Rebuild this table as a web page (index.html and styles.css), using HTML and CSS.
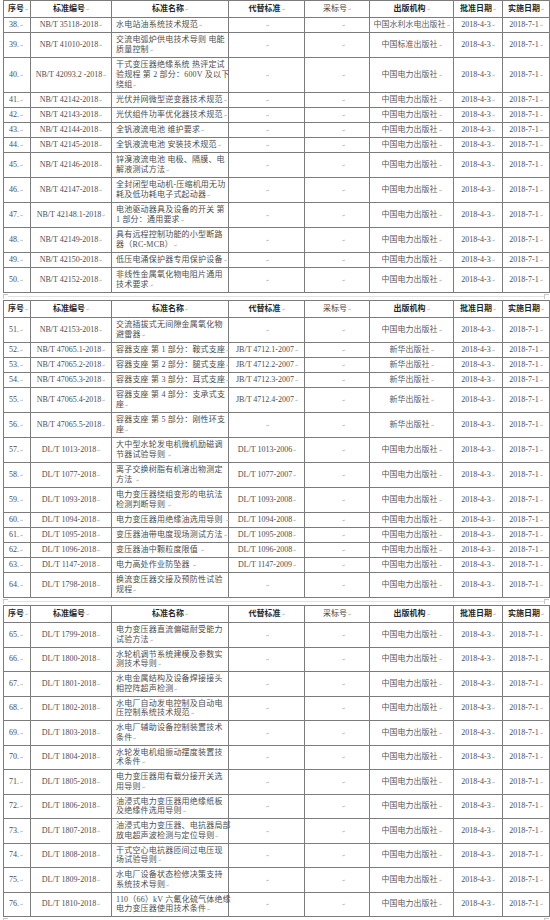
FILE: index.html
```html
<!DOCTYPE html>
<html lang="zh">
<head>
<meta charset="utf-8">
<title>标准清单</title>
<link rel="stylesheet" href="styles.css">
</head>
<body>
<div class="page">

<table class="std">
<colgroup><col class="c1"><col class="c2"><col class="c3"><col class="c4"><col class="c5"><col class="c6"><col class="c7"><col class="c8"></colgroup>
<tr class="head"><th class="no">序号<span class="pm">↵</span></th><th>标准编号<span class="pm">↵</span></th><th>标准名称<span class="pm">↵</span></th><th>代替标准<span class="pm">↵</span></th><th class="light">采标号<span class="pm">↵</span></th><th>出版机构<span class="pm">↵</span></th><th>批准日期<span class="pm">↵</span></th><th>实施日期<span class="pm">↵</span></th></tr>
<tr><td class="no">38.<span class="pm">↵</span></td><td class="code">NB/T 35118-2018<span class="pm">↵</span></td><td class="name">水电站油系统技术规范<span class="pm">↵</span></td><td class="rep"><span class="pm">↵</span></td><td class="adopt"><span class="pm">↵</span></td><td class="pub">中国水利水电出版社<span class="pm">↵</span></td><td class="date">2018-4-3<span class="pm">↵</span></td><td class="date">2018-7-1<span class="pm">↵</span></td></tr>
<tr><td class="no">39.<span class="pm">↵</span></td><td class="code">NB/T 41010-2018<span class="pm">↵</span></td><td class="name">交流电弧炉供电技术导则 电能<br>质量控制<span class="pm">↵</span></td><td class="rep"><span class="pm">↵</span></td><td class="adopt"><span class="pm">↵</span></td><td class="pub">中国标准出版社<span class="pm">↵</span></td><td class="date">2018-4-3<span class="pm">↵</span></td><td class="date">2018-7-1<span class="pm">↵</span></td></tr>
<tr><td class="no">40.<span class="pm">↵</span></td><td class="code">NB/T 42093.2 -2018<span class="pm">↵</span></td><td class="name">干式变压器绝缘系统 热评定试<br>验规程 第 2 部分：600V 及以下<br>绕组<span class="pm">↵</span></td><td class="rep"><span class="pm">↵</span></td><td class="adopt"><span class="pm">↵</span></td><td class="pub">中国电力出版社<span class="pm">↵</span></td><td class="date">2018-4-3<span class="pm">↵</span></td><td class="date">2018-7-1<span class="pm">↵</span></td></tr>
<tr><td class="no">41.<span class="pm">↵</span></td><td class="code">NB/T 42142-2018<span class="pm">↵</span></td><td class="name">光伏并网微型逆变器技术规范<span class="pm">↵</span></td><td class="rep"><span class="pm">↵</span></td><td class="adopt"><span class="pm">↵</span></td><td class="pub">中国电力出版社<span class="pm">↵</span></td><td class="date">2018-4-3<span class="pm">↵</span></td><td class="date">2018-7-1<span class="pm">↵</span></td></tr>
<tr><td class="no">42.<span class="pm">↵</span></td><td class="code">NB/T 42143-2018<span class="pm">↵</span></td><td class="name">光伏组件功率优化器技术规范<span class="pm">↵</span></td><td class="rep"><span class="pm">↵</span></td><td class="adopt"><span class="pm">↵</span></td><td class="pub">中国电力出版社<span class="pm">↵</span></td><td class="date">2018-4-3<span class="pm">↵</span></td><td class="date">2018-7-1<span class="pm">↵</span></td></tr>
<tr><td class="no">43.<span class="pm">↵</span></td><td class="code">NB/T 42144-2018<span class="pm">↵</span></td><td class="name">全钒液流电池 维护要求<span class="pm">↵</span></td><td class="rep"><span class="pm">↵</span></td><td class="adopt"><span class="pm">↵</span></td><td class="pub">中国电力出版社<span class="pm">↵</span></td><td class="date">2018-4-3<span class="pm">↵</span></td><td class="date">2018-7-1<span class="pm">↵</span></td></tr>
<tr><td class="no">44.<span class="pm">↵</span></td><td class="code">NB/T 42145-2018<span class="pm">↵</span></td><td class="name">全钒液流电池 安装技术规范<span class="pm">↵</span></td><td class="rep"><span class="pm">↵</span></td><td class="adopt"><span class="pm">↵</span></td><td class="pub">中国电力出版社<span class="pm">↵</span></td><td class="date">2018-4-3<span class="pm">↵</span></td><td class="date">2018-7-1<span class="pm">↵</span></td></tr>
<tr><td class="no">45.<span class="pm">↵</span></td><td class="code">NB/T 42146-2018<span class="pm">↵</span></td><td class="name">锌溴液流电池 电极、隔膜、电<br>解液测试方法<span class="pm">↵</span></td><td class="rep"><span class="pm">↵</span></td><td class="adopt"><span class="pm">↵</span></td><td class="pub">中国电力出版社<span class="pm">↵</span></td><td class="date">2018-4-3<span class="pm">↵</span></td><td class="date">2018-7-1<span class="pm">↵</span></td></tr>
<tr><td class="no">46.<span class="pm">↵</span></td><td class="code">NB/T 42147-2018<span class="pm">↵</span></td><td class="name">全封闭型电动机-压缩机用无功<br>耗及低功耗电子式起动器<span class="pm">↵</span></td><td class="rep"><span class="pm">↵</span></td><td class="adopt"><span class="pm">↵</span></td><td class="pub">中国电力出版社<span class="pm">↵</span></td><td class="date">2018-4-3<span class="pm">↵</span></td><td class="date">2018-7-1<span class="pm">↵</span></td></tr>
<tr><td class="no">47.<span class="pm">↵</span></td><td class="code">NB/T 42148.1-2018<span class="pm">↵</span></td><td class="name">电池驱动器具及设备的开关 第<br>1 部分：通用要求<span class="pm">↵</span></td><td class="rep"><span class="pm">↵</span></td><td class="adopt"><span class="pm">↵</span></td><td class="pub">中国电力出版社<span class="pm">↵</span></td><td class="date">2018-4-3<span class="pm">↵</span></td><td class="date">2018-7-1<span class="pm">↵</span></td></tr>
<tr><td class="no">48.<span class="pm">↵</span></td><td class="code">NB/T 42149-2018<span class="pm">↵</span></td><td class="name">具有远程控制功能的小型断路<br>器（RC-MCB）<span class="pm">↵</span></td><td class="rep"><span class="pm">↵</span></td><td class="adopt"><span class="pm">↵</span></td><td class="pub">中国电力出版社<span class="pm">↵</span></td><td class="date">2018-4-3<span class="pm">↵</span></td><td class="date">2018-7-1<span class="pm">↵</span></td></tr>
<tr><td class="no">49.<span class="pm">↵</span></td><td class="code">NB/T 42150-2018<span class="pm">↵</span></td><td class="name">低压电涌保护器专用保护设备<span class="pm">↵</span></td><td class="rep"><span class="pm">↵</span></td><td class="adopt"><span class="pm">↵</span></td><td class="pub">中国电力出版社<span class="pm">↵</span></td><td class="date">2018-4-3<span class="pm">↵</span></td><td class="date">2018-7-1<span class="pm">↵</span></td></tr>
<tr><td class="no">50.<span class="pm">↵</span></td><td class="code">NB/T 42152-2018<span class="pm">↵</span></td><td class="name">非线性金属氧化物电阻片通用<br>技术要求<span class="pm">↵</span></td><td class="rep"><span class="pm">↵</span></td><td class="adopt"><span class="pm">↵</span></td><td class="pub">中国电力出版社<span class="pm">↵</span></td><td class="date">2018-4-3<span class="pm">↵</span></td><td class="date">2018-7-1<span class="pm">↵</span></td></tr>
</table>

<div class="sep"><span class="mk"></span><span class="line"></span><span class="mk"></span></div>

<table class="std">
<colgroup><col class="c1"><col class="c2"><col class="c3"><col class="c4"><col class="c5"><col class="c6"><col class="c7"><col class="c8"></colgroup>
<tr class="head"><th class="no">序号<span class="pm">↵</span></th><th>标准编号<span class="pm">↵</span></th><th>标准名称<span class="pm">↵</span></th><th>代替标准<span class="pm">↵</span></th><th class="light">采标号<span class="pm">↵</span></th><th>出版机构<span class="pm">↵</span></th><th>批准日期<span class="pm">↵</span></th><th>实施日期<span class="pm">↵</span></th></tr>
<tr><td class="no">51.<span class="pm">↵</span></td><td class="code">NB/T 42153-2018<span class="pm">↵</span></td><td class="name">交流插拔式无间隙金属氧化物<br>避雷器<span class="pm">↵</span></td><td class="rep"><span class="pm">↵</span></td><td class="adopt"><span class="pm">↵</span></td><td class="pub">中国电力出版社<span class="pm">↵</span></td><td class="date">2018-4-3<span class="pm">↵</span></td><td class="date">2018-7-1<span class="pm">↵</span></td></tr>
<tr><td class="no">52.<span class="pm">↵</span></td><td class="code">NB/T 47065.1-2018<span class="pm">↵</span></td><td class="name">容器支座 第 1 部分：鞍式支座<span class="pm">↵</span></td><td class="rep">JB/T 4712.1-2007<span class="pm">↵</span></td><td class="adopt"><span class="pm">↵</span></td><td class="pub">新华出版社<span class="pm">↵</span></td><td class="date">2018-4-3<span class="pm">↵</span></td><td class="date">2018-7-1<span class="pm">↵</span></td></tr>
<tr><td class="no">53.<span class="pm">↵</span></td><td class="code">NB/T 47065.2-2018<span class="pm">↵</span></td><td class="name">容器支座 第 2 部分：腿式支座<span class="pm">↵</span></td><td class="rep">JB/T 4712.2-2007<span class="pm">↵</span></td><td class="adopt"><span class="pm">↵</span></td><td class="pub">新华出版社<span class="pm">↵</span></td><td class="date">2018-4-3<span class="pm">↵</span></td><td class="date">2018-7-1<span class="pm">↵</span></td></tr>
<tr><td class="no">54.<span class="pm">↵</span></td><td class="code">NB/T 47065.3-2018<span class="pm">↵</span></td><td class="name">容器支座 第 3 部分：耳式支座<span class="pm">↵</span></td><td class="rep">JB/T 4712.3-2007<span class="pm">↵</span></td><td class="adopt"><span class="pm">↵</span></td><td class="pub">新华出版社<span class="pm">↵</span></td><td class="date">2018-4-3<span class="pm">↵</span></td><td class="date">2018-7-1<span class="pm">↵</span></td></tr>
<tr><td class="no">55.<span class="pm">↵</span></td><td class="code">NB/T 47065.4-2018<span class="pm">↵</span></td><td class="name">容器支座 第 4 部分：支承式支<br>座<span class="pm">↵</span></td><td class="rep">JB/T 4712.4-2007<span class="pm">↵</span></td><td class="adopt"><span class="pm">↵</span></td><td class="pub">新华出版社<span class="pm">↵</span></td><td class="date">2018-4-3<span class="pm">↵</span></td><td class="date">2018-7-1<span class="pm">↵</span></td></tr>
<tr><td class="no">56.<span class="pm">↵</span></td><td class="code">NB/T 47065.5-2018<span class="pm">↵</span></td><td class="name">容器支座 第 5 部分：刚性环支<br>座<span class="pm">↵</span></td><td class="rep"><span class="pm">↵</span></td><td class="adopt"><span class="pm">↵</span></td><td class="pub">新华出版社<span class="pm">↵</span></td><td class="date">2018-4-3<span class="pm">↵</span></td><td class="date">2018-7-1<span class="pm">↵</span></td></tr>
<tr><td class="no">57.<span class="pm">↵</span></td><td class="code">DL/T 1013-2018<span class="pm">↵</span></td><td class="name">大中型水轮发电机微机励磁调<br>节器试验导则 <span class="pm">↵</span></td><td class="rep">DL/T 1013-2006<span class="pm">↵</span></td><td class="adopt"><span class="pm">↵</span></td><td class="pub">中国电力出版社<span class="pm">↵</span></td><td class="date">2018-4-3<span class="pm">↵</span></td><td class="date">2018-7-1<span class="pm">↵</span></td></tr>
<tr><td class="no">58.<span class="pm">↵</span></td><td class="code">DL/T 1077-2018<span class="pm">↵</span></td><td class="name">离子交换树脂有机溶出物测定<br>方法 <span class="pm">↵</span></td><td class="rep">DL/T 1077-2007<span class="pm">↵</span></td><td class="adopt"><span class="pm">↵</span></td><td class="pub">中国电力出版社<span class="pm">↵</span></td><td class="date">2018-4-3<span class="pm">↵</span></td><td class="date">2018-7-1<span class="pm">↵</span></td></tr>
<tr><td class="no">59.<span class="pm">↵</span></td><td class="code">DL/T 1093-2018<span class="pm">↵</span></td><td class="name">电力变压器绕组变形的电抗法<br>检测判断导则 <span class="pm">↵</span></td><td class="rep">DL/T 1093-2008<span class="pm">↵</span></td><td class="adopt"><span class="pm">↵</span></td><td class="pub">中国电力出版社<span class="pm">↵</span></td><td class="date">2018-4-3<span class="pm">↵</span></td><td class="date">2018-7-1<span class="pm">↵</span></td></tr>
<tr><td class="no">60.<span class="pm">↵</span></td><td class="code">DL/T 1094-2018<span class="pm">↵</span></td><td class="name">电力变压器用绝缘油选用导则 <span class="pm">↵</span></td><td class="rep">DL/T 1094-2008<span class="pm">↵</span></td><td class="adopt"><span class="pm">↵</span></td><td class="pub">中国电力出版社<span class="pm">↵</span></td><td class="date">2018-4-3<span class="pm">↵</span></td><td class="date">2018-7-1<span class="pm">↵</span></td></tr>
<tr><td class="no">61.<span class="pm">↵</span></td><td class="code">DL/T 1095-2018<span class="pm">↵</span></td><td class="name">变压器油带电度现场测试方法<span class="pm">↵</span></td><td class="rep">DL/T 1095-2008<span class="pm">↵</span></td><td class="adopt"><span class="pm">↵</span></td><td class="pub">中国电力出版社<span class="pm">↵</span></td><td class="date">2018-4-3<span class="pm">↵</span></td><td class="date">2018-7-1<span class="pm">↵</span></td></tr>
<tr><td class="no">62.<span class="pm">↵</span></td><td class="code">DL/T 1096-2018<span class="pm">↵</span></td><td class="name">变压器油中颗粒度限值 <span class="pm">↵</span></td><td class="rep">DL/T 1096-2008<span class="pm">↵</span></td><td class="adopt"><span class="pm">↵</span></td><td class="pub">中国电力出版社<span class="pm">↵</span></td><td class="date">2018-4-3<span class="pm">↵</span></td><td class="date">2018-7-1<span class="pm">↵</span></td></tr>
<tr><td class="no">63.<span class="pm">↵</span></td><td class="code">DL/T 1147-2018<span class="pm">↵</span></td><td class="name">电力高处作业防坠器 <span class="pm">↵</span></td><td class="rep">DL/T 1147-2009<span class="pm">↵</span></td><td class="adopt"><span class="pm">↵</span></td><td class="pub">中国电力出版社<span class="pm">↵</span></td><td class="date">2018-4-3<span class="pm">↵</span></td><td class="date">2018-7-1<span class="pm">↵</span></td></tr>
<tr><td class="no">64.<span class="pm">↵</span></td><td class="code">DL/T 1798-2018<span class="pm">↵</span></td><td class="name">换流变压器交接及预防性试验<br>规程<span class="pm">↵</span></td><td class="rep"><span class="pm">↵</span></td><td class="adopt"><span class="pm">↵</span></td><td class="pub">中国电力出版社<span class="pm">↵</span></td><td class="date">2018-4-3<span class="pm">↵</span></td><td class="date">2018-7-1<span class="pm">↵</span></td></tr>
</table>

<div class="sep"><span class="mk"></span><span class="line"></span><span class="mk"></span></div>

<table class="std tight">
<colgroup><col class="c1"><col class="c2"><col class="c3"><col class="c4"><col class="c5"><col class="c6"><col class="c7"><col class="c8"></colgroup>
<tr class="head"><th class="no">序号<span class="pm">↵</span></th><th>标准编号<span class="pm">↵</span></th><th>标准名称<span class="pm">↵</span></th><th>代替标准<span class="pm">↵</span></th><th class="light">采标号<span class="pm">↵</span></th><th>出版机构<span class="pm">↵</span></th><th>批准日期<span class="pm">↵</span></th><th>实施日期<span class="pm">↵</span></th></tr>
<tr><td class="no">65.<span class="pm">↵</span></td><td class="code">DL/T 1799-2018<span class="pm">↵</span></td><td class="name">电力变压器直流偏磁耐受能力<br>试验方法<span class="pm">↵</span></td><td class="rep"><span class="pm">↵</span></td><td class="adopt"><span class="pm">↵</span></td><td class="pub">中国电力出版社<span class="pm">↵</span></td><td class="date">2018-4-3<span class="pm">↵</span></td><td class="date">2018-7-1<span class="pm">↵</span></td></tr>
<tr><td class="no">66.<span class="pm">↵</span></td><td class="code">DL/T 1800-2018<span class="pm">↵</span></td><td class="name">水轮机调节系统建模及参数实<br>测技术导则<span class="pm">↵</span></td><td class="rep"><span class="pm">↵</span></td><td class="adopt"><span class="pm">↵</span></td><td class="pub">中国电力出版社<span class="pm">↵</span></td><td class="date">2018-4-3<span class="pm">↵</span></td><td class="date">2018-7-1<span class="pm">↵</span></td></tr>
<tr><td class="no">67.<span class="pm">↵</span></td><td class="code">DL/T 1801-2018<span class="pm">↵</span></td><td class="name">水电金属结构及设备焊接接头<br>相控阵超声检测<span class="pm">↵</span></td><td class="rep"><span class="pm">↵</span></td><td class="adopt"><span class="pm">↵</span></td><td class="pub">中国电力出版社<span class="pm">↵</span></td><td class="date">2018-4-3<span class="pm">↵</span></td><td class="date">2018-7-1<span class="pm">↵</span></td></tr>
<tr><td class="no">68.<span class="pm">↵</span></td><td class="code">DL/T 1802-2018<span class="pm">↵</span></td><td class="name">水电厂自动发电控制及自动电<br>压控制系统技术规范<span class="pm">↵</span></td><td class="rep"><span class="pm">↵</span></td><td class="adopt"><span class="pm">↵</span></td><td class="pub">中国电力出版社<span class="pm">↵</span></td><td class="date">2018-4-3<span class="pm">↵</span></td><td class="date">2018-7-1<span class="pm">↵</span></td></tr>
<tr><td class="no">69.<span class="pm">↵</span></td><td class="code">DL/T 1803-2018<span class="pm">↵</span></td><td class="name">水电厂辅助设备控制装置技术<br>条件<span class="pm">↵</span></td><td class="rep"><span class="pm">↵</span></td><td class="adopt"><span class="pm">↵</span></td><td class="pub">中国电力出版社<span class="pm">↵</span></td><td class="date">2018-4-3<span class="pm">↵</span></td><td class="date">2018-7-1<span class="pm">↵</span></td></tr>
<tr><td class="no">70.<span class="pm">↵</span></td><td class="code">DL/T 1804-2018<span class="pm">↵</span></td><td class="name">水轮发电机组振动摆度装置技<br>术条件<span class="pm">↵</span></td><td class="rep"><span class="pm">↵</span></td><td class="adopt"><span class="pm">↵</span></td><td class="pub">中国电力出版社<span class="pm">↵</span></td><td class="date">2018-4-3<span class="pm">↵</span></td><td class="date">2018-7-1<span class="pm">↵</span></td></tr>
<tr><td class="no">71.<span class="pm">↵</span></td><td class="code">DL/T 1805-2018<span class="pm">↵</span></td><td class="name">电力变压器用有载分接开关选<br>用导则<span class="pm">↵</span></td><td class="rep"><span class="pm">↵</span></td><td class="adopt"><span class="pm">↵</span></td><td class="pub">中国电力出版社<span class="pm">↵</span></td><td class="date">2018-4-3<span class="pm">↵</span></td><td class="date">2018-7-1<span class="pm">↵</span></td></tr>
<tr><td class="no">72.<span class="pm">↵</span></td><td class="code">DL/T 1806-2018<span class="pm">↵</span></td><td class="name">油浸式电力变压器用绝缘纸板<br>及绝缘件选用导则<span class="pm">↵</span></td><td class="rep"><span class="pm">↵</span></td><td class="adopt"><span class="pm">↵</span></td><td class="pub">中国电力出版社<span class="pm">↵</span></td><td class="date">2018-4-3<span class="pm">↵</span></td><td class="date">2018-7-1<span class="pm">↵</span></td></tr>
<tr><td class="no">73.<span class="pm">↵</span></td><td class="code">DL/T 1807-2018<span class="pm">↵</span></td><td class="name">油浸式电力变压器、电抗器局部<br>放电超声波检测与定位导则<span class="pm">↵</span></td><td class="rep"><span class="pm">↵</span></td><td class="adopt"><span class="pm">↵</span></td><td class="pub">中国电力出版社<span class="pm">↵</span></td><td class="date">2018-4-3<span class="pm">↵</span></td><td class="date">2018-7-1<span class="pm">↵</span></td></tr>
<tr><td class="no">74.<span class="pm">↵</span></td><td class="code">DL/T 1808-2018<span class="pm">↵</span></td><td class="name">干式空心电抗器匝间过电压现<br>场试验导则<span class="pm">↵</span></td><td class="rep"><span class="pm">↵</span></td><td class="adopt"><span class="pm">↵</span></td><td class="pub">中国电力出版社<span class="pm">↵</span></td><td class="date">2018-4-3<span class="pm">↵</span></td><td class="date">2018-7-1<span class="pm">↵</span></td></tr>
<tr><td class="no">75.<span class="pm">↵</span></td><td class="code">DL/T 1809-2018<span class="pm">↵</span></td><td class="name">水电厂设备状态检修决策支持<br>系统技术导则<span class="pm">↵</span></td><td class="rep"><span class="pm">↵</span></td><td class="adopt"><span class="pm">↵</span></td><td class="pub">中国电力出版社<span class="pm">↵</span></td><td class="date">2018-4-3<span class="pm">↵</span></td><td class="date">2018-7-1<span class="pm">↵</span></td></tr>
<tr><td class="no">76.<span class="pm">↵</span></td><td class="code">DL/T 1810-2018<span class="pm">↵</span></td><td class="name">110（66）kV 六氟化硫气体绝缘<br>电力变压器使用技术条件<span class="pm">↵</span></td><td class="rep"><span class="pm">↵</span></td><td class="adopt"><span class="pm">↵</span></td><td class="pub">中国电力出版社<span class="pm">↵</span></td><td class="date">2018-4-3<span class="pm">↵</span></td><td class="date">2018-7-1<span class="pm">↵</span></td></tr>
</table>

<div class="sep"><span class="mk"></span><span class="line"></span><span class="mk"></span></div>

</div>
</body>
</html>
```

FILE: styles.css
```css
html, body {
  margin: 0;
  padding: 0;
  background: #ffffff;
}

.page {
  padding: 0 1px 0 3px;
  font-family: "Liberation Serif", "Noto Sans CJK SC", serif;
  font-size: 8px;
  color: #4d4d4d;
}

.std {
  width: 546px;
  border-collapse: collapse;
  table-layout: fixed;
}

.c1 { width: 27px; }
.c2 { width: 81px; }
.c3 { width: 117px; }
.c4 { width: 76px; }
.c5 { width: 65px; }
.c6 { width: 84px; }
.c7 { width: 49px; }
.c8 { width: 47px; }

.std th,
.std td {
  border: 1px solid #7c7c7c;
  padding: 2px 2px;
  height: 10px;
  line-height: 10px;
  vertical-align: middle;
  text-align: center;
  white-space: nowrap;
  overflow: visible;
  font-weight: 400;
}

.std.tight td {
  line-height: 9.75px;
}

.std .head th {
  padding: 3px 2px;
  font-weight: 700;
  color: #262626;
}

.std .head th.light {
  font-weight: 400;
  color: #444444;
}

.std td.no {
  text-align: left;
  padding-left: 5px;
}

.std th.no {
  text-align: left;
  padding-left: 4px;
}

.std td.name {
  text-align: left;
  padding-left: 4px;
  letter-spacing: 0.2px;
}

.std td.pub {
  color: #5a5a5a;
}

.std td.rep {
  padding-left: 3px;
}

.std td.adopt {
  padding-left: 14px;
}

.pm {
  font-family: "Liberation Serif", serif;
  font-size: 4px;
  line-height: 0;
  vertical-align: baseline;
  color: #aaaaaa;
  font-weight: 400;
  letter-spacing: 0;
  margin-left: 1px;
}

.sep {
  display: flex;
  align-items: center;
  height: 7px;
  width: 546px;
}

.sep .line {
  flex: 1;
  border-top: 1px solid #e2e2e2;
}

.sep .mk {
  width: 4px;
  height: 4px;
  border-top: 1px solid #c8c8c8;
  border-left: 1px solid #c8c8c8;
}
```
